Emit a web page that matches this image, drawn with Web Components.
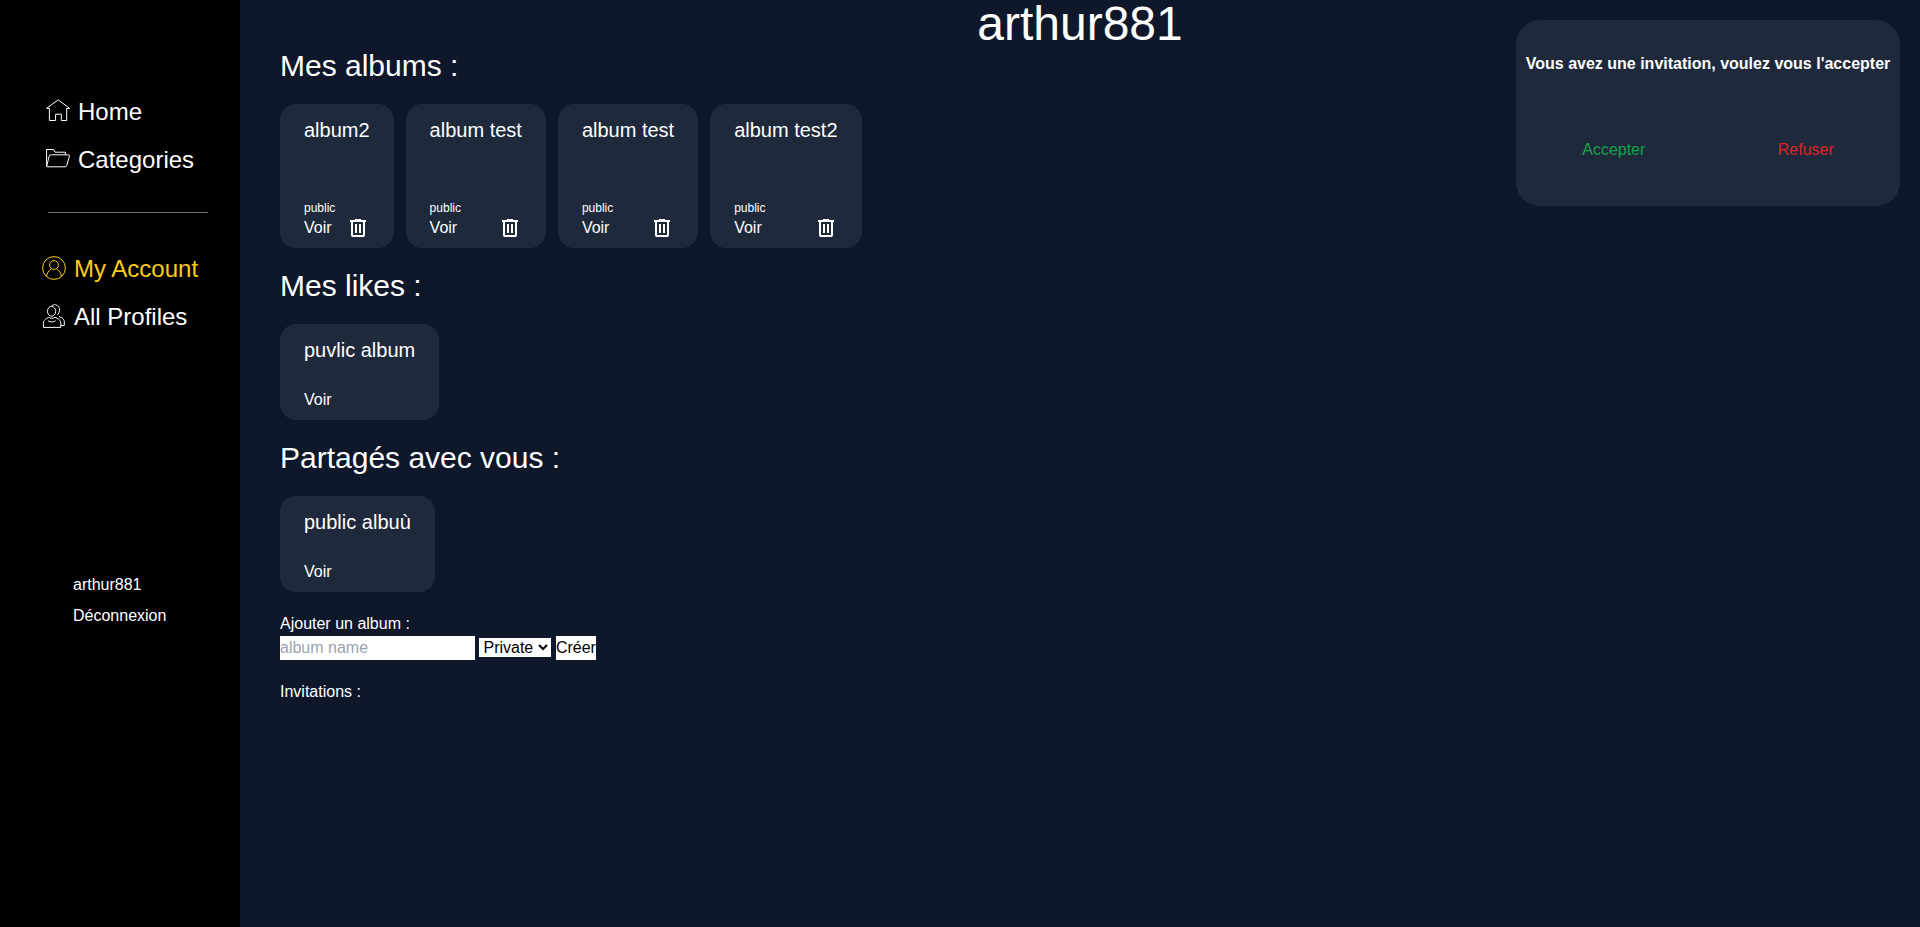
<!DOCTYPE html>
<html lang="fr">
<head>
<meta charset="utf-8">
<meta name="viewport" content="width=device-width, initial-scale=1">
<title>arthur881</title>
<style>
  body {
    margin: 0;
    background: #0f172a;
    color: #fff;
    font: 16px/24px "Liberation Sans", Arial, sans-serif;
  }
</style>
</head>
<body>
<account-page></account-page>

<script>
const define = (name, html, setup) => {
  const template = document.createElement('template');
  template.innerHTML = html;
  customElements.define(name, class extends HTMLElement {
    constructor() {
      super();
      this.attachShadow({ mode: 'open' }).append(template.content.cloneNode(true));
    }
    connectedCallback() {
      if (setup) setup(this, this.shadowRoot);
    }
  });
};

const icons = {
  home: '<path d="M.6 9.4 12.2.8l11.4 8.6h-2.9v12.1h-5.4v-6.3H9.6v6.3H3.4V9.4z"/>',
  folder: '<path d="M.6 19.5V2.5h6.8l1.6 2.7h10.4v2.4M.6 19.5 3.2 9q.3-1.2 1.5-1.2h17.6q1.5 0 1.1 1.3l-2.6 9.3q-.4 1.4-1.8 1.4H1.4q-.8 0-.8-.8"/>',
  account: '<circle cx="12" cy="12" r="11.4"/><circle cx="12" cy="9" r="4.4"/><path d="M4.6 20.6c.3-3.6 2-5.8 4.7-7.9M19.4 20.6c-.3-3.6-2-5.8-4.7-7.9"/>',
  profiles: '<ellipse cx="9.6" cy="7.3" rx="4.1" ry="4.9"/><path d="M9.4 2.1C10.6.9 12 .5 13.4.8c3 .5 4.5 2.9 4.1 5.9-.2 1.7-.9 3-1.9 4.1M1.4 23.4v-4.1c0-2.2 1.3-3.7 3.4-4.9l1.9-1.1c2 1.3 4.3 1.3 6.3 0l2.2 1.1c2.4 1.2 3.6 2.7 3.6 4.9v4.1zM6 16.8c2.3 1.6 5.3 1.6 7.6 0M16.8 12.3l2.3 1.2c2 1 3.2 2.4 3.2 4.4v3.6H19"/>'
};

define('nav-link', `
  <style>
    :host { display: block; }
    a {
      display: flex;
      align-items: center;
      gap: 8px;
      color: inherit;
      font-size: 24px;
      line-height: 32px;
      text-decoration: none;
    }
    svg {
      width: 24px;
      height: 24px;
      margin-bottom: 2px;
      overflow: visible;
      fill: none;
      stroke: currentColor;
      stroke-width: 1;
      stroke-linejoin: round;
    }
    :host([active]) { color: #facc15; }
  </style>
  <a href="#"><svg viewBox="0 0 24 24" aria-hidden="true"></svg><span><slot></slot></span></a>
`, (host, root) => { root.querySelector('svg').innerHTML = icons[host.getAttribute('icon')]; });

define('side-bar', `
  <style>
    :host {
      display: block;
      box-sizing: border-box;
      padding: 96px 0 24px;
      background: #000;
    }
    nav { display: grid; gap: 16px; padding-left: 46px; }
    nav.people { padding-left: 42px; }
    hr { margin: 36px 32px 40px 48px; border: 0; border-top: 1px solid #6b7280; }
    .user {
      display: grid;
      gap: 7px;
      justify-items: start;
      margin-top: 240px;
      padding-left: 73px;
    }
    .user a { color: inherit; text-decoration: none; }
  </style>
  <nav aria-label="Navigation">
    <nav-link icon="home">Home</nav-link>
    <nav-link icon="folder">Categories</nav-link>
  </nav>
  <hr>
  <nav class="people" aria-label="Profils">
    <nav-link icon="account" active>My Account</nav-link>
    <nav-link icon="profiles">All Profiles</nav-link>
  </nav>
  <div class="user">
    <span>arthur881</span>
    <a href="#">Déconnexion</a>
  </div>
`);

define('album-card', `
  <style>
    :host {
      display: flex;
      flex-direction: column;
      padding: 12px 24px 8px;
      border-radius: 16px;
      background: #1e293b;
    }
    h3 { margin: 0 0 24px; font-size: 20px; font-weight: 400; line-height: 28px; }
    :host([owned]) h3 { margin-bottom: 56px; }
    small { font-size: 12px; line-height: 16px; }
    .actions { display: flex; justify-content: space-between; }
    a { color: inherit; text-decoration: none; }
    button { padding: 0; border: 0; background: none; color: inherit; }
    svg { display: block; width: 24px; height: 24px; fill: currentColor; }
    :host(:not([owned])) :is(small, button) { display: none; }
  </style>
  <h3><slot></slot></h3>
  <small>public</small>
  <div class="actions">
    <a href="#">Voir</a>
    <button type="button" aria-label="Supprimer">
      <svg viewBox="0 0 24 24" aria-hidden="true"><path d="M7 21q-.825 0-1.412-.587Q5 19.825 5 19V6H4V4h5V3h6v1h5v2h-1v13q0 .825-.587 1.413Q17.825 21 17 21ZM17 6H7v13h10ZM9 17h2V8H9Zm4 0h2V8h-2Z"/></svg>
    </button>
  </div>
`);

define('album-section', `
  <style>
    :host { display: block; }
    h2 { margin: 0 0 20px; font-size: 30px; font-weight: 400; line-height: 36px; }
    div { display: flex; flex-wrap: wrap; gap: 12px; }
  </style>
  <h2></h2>
  <div><slot></slot></div>
`, (host, root) => { root.querySelector('h2').textContent = host.getAttribute('heading'); });

define('album-form', `
  <style>
    :host { display: block; }
    label { display: block; }
    form { margin: 0; }
    input, select, button {
      margin: 0;
      padding: 0;
      border: 0;
      border-radius: 0;
      background: #fff;
      color: #000;
      font: inherit;
    }
    input { box-sizing: border-box; width: 195px; height: 24px; }
    input::placeholder { color: #9ca3af; }
    select { width: 72px; line-height: normal; }
  </style>
  <form>
    <label for="name">Ajouter un album :</label>
    <input id="name" type="text" placeholder="album name">
    <select aria-label="Visibilité"><option>Private</option><option>Public</option></select>
    <button type="button">Créer</button>
  </form>
`);

define('invitation-toast', `
  <style>
    :host {
      display: block;
      box-sizing: border-box;
      width: 384px;
      padding: 32px 0 44px;
      border-radius: 24px;
      background: #1e293b;
      text-align: center;
    }
    p { margin: 0 0 62px; font-weight: 700; }
    div { display: flex; justify-content: space-around; }
    button { padding: 0; border: 0; background: none; font: inherit; }
    .accept { color: #16a34a; }
    .refuse { color: #dc2626; }
  </style>
  <p>Vous avez une invitation, voulez vous l'accepter</p>
  <div>
    <button type="button" class="accept">Accepter</button>
    <button type="button" class="refuse">Refuser</button>
  </div>
`);

define('account-page', `
  <style>
    :host { display: grid; grid-template-columns: 240px 1fr; min-height: 100vh; }
    h1 { margin: 0; font-size: 48px; font-weight: 400; line-height: 48px; text-align: center; }
    .content { display: grid; gap: 20px; padding: 0 40px; }
    p { margin: 0; }
    invitation-toast { position: fixed; top: 20px; right: 20px; }
  </style>
  <side-bar></side-bar>
  <main>
    <h1>arthur881</h1>
    <div class="content">
      <album-section heading="Mes albums :">
        <album-card owned>album2</album-card>
        <album-card owned>album test</album-card>
        <album-card owned>album test</album-card>
        <album-card owned>album test2</album-card>
      </album-section>
      <album-section heading="Mes likes :">
        <album-card>puvlic album</album-card>
      </album-section>
      <album-section heading="Partagés avec vous :">
        <album-card>public albuù</album-card>
      </album-section>
      <album-form></album-form>
      <p>Invitations :</p>
    </div>
  </main>
  <invitation-toast></invitation-toast>
`);
</script>
</body>
</html>
